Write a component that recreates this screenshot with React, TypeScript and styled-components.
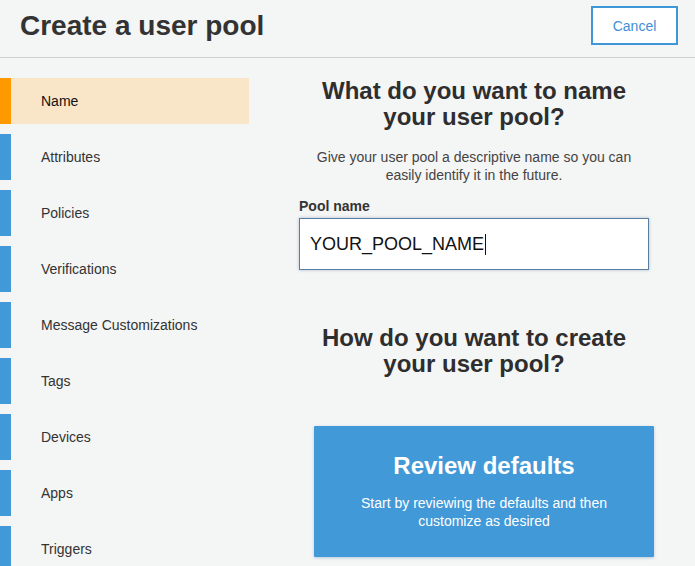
import React from 'react';
import styled, { createGlobalStyle } from 'styled-components';

const GlobalStyle = createGlobalStyle`
  html, body {
    margin: 0;
    padding: 0;
    background: #f4f5f5;
    font-family: "Liberation Sans", Arial, sans-serif;
    color: #333;
  }
  * {
    box-sizing: border-box;
  }
`;

const Page = styled.div`
  width: 695px;
  height: 566px;
  overflow: hidden;
  background: #f4f5f5;
`;

const Header = styled.header`
  height: 58px;
  display: flex;
  align-items: center;
  justify-content: space-between;
  padding: 0 17px 6px 20px;
  border-bottom: 1px solid #cfd1d1;
`;

const Title = styled.h1`
  margin: 0;
  font-size: 28px;
  font-weight: bold;
  color: #333;
`;

const CancelButton = styled.button`
  width: 87px;
  height: 39px;
  background: #fff;
  border: 2px solid #3f97d8;
  color: #3f8fd6;
  font-family: inherit;
  font-size: 14px;
  cursor: pointer;
`;

const Body = styled.div`
  display: grid;
  grid-template-columns: 249px minmax(0, 1fr);
  padding-top: 20px;
`;

const Nav = styled.nav`
  display: flex;
  flex-direction: column;
  gap: 10px;
`;

const NavItem = styled.div<{ $active?: boolean }>`
  height: 46px;
  display: flex;
  align-items: center;
  padding-left: 30px;
  border-left: 11px solid ${(p) => (p.$active ? '#ff9900' : '#4299d7')};
  background: ${(p) => (p.$active ? '#f9e5c8' : 'transparent')};
  font-size: 14px;
  color: ${(p) => (p.$active ? '#111' : '#333')};
`;

const Main = styled.main`
  display: flex;
  flex-direction: column;
  padding: 0 46px 0 50px;
`;

const Question = styled.h2<{ $gap?: number }>`
  margin: ${(p) => p.$gap ?? 0}px 0 0;
  font-size: 24px;
  line-height: 26px;
  font-weight: bold;
  text-align: center;
  color: #2e2e2e;
`;

const Hint = styled.p`
  margin: 18px 0 0;
  font-size: 14px;
  line-height: 18px;
  text-align: center;
  color: #444;
`;

const Label = styled.label`
  margin-top: 13px;
  font-size: 14px;
  line-height: 18px;
  font-weight: bold;
  color: #333;
`;

const Field = styled.div`
  margin-top: 3px;
  height: 52px;
  display: flex;
  align-items: center;
  padding-left: 10px;
  background: #fff;
  border: 1px solid #5b7f9f;
  box-shadow: 0 0 3px rgba(91, 127, 159, 0.45);
  font-size: 18px;
  color: #111;
`;

const Caret = styled.span`
  display: inline-block;
  width: 1px;
  height: 21px;
  background: #111;
  margin-left: 1px;
`;

const Card = styled.div`
  align-self: flex-start;
  flex-shrink: 0;
  margin: 49px 0 0 15px;
  width: 340px;
  padding: 27px 20px 27px;
  background: #4299d7;
  box-shadow: 0 1px 3px rgba(66, 120, 180, 0.35);
  color: #fff;
  text-align: center;
  border-radius: 1px;
`;

const CardTitle = styled.div`
  font-size: 24px;
  line-height: 26px;
  font-weight: bold;
`;

const CardText = styled.div`
  margin-top: 15px;
  font-size: 14px;
  line-height: 18px;
  padding: 0 20px;
`;

const steps = [
  'Name',
  'Attributes',
  'Policies',
  'Verifications',
  'Message Customizations',
  'Tags',
  'Devices',
  'Apps',
  'Triggers',
];

export default function App() {
  return (
    <Page>
      <GlobalStyle />
      <Header>
        <Title>Create a user pool</Title>
        <CancelButton>Cancel</CancelButton>
      </Header>
      <Body>
        <Nav>
          {steps.map((s, i) => (
            <NavItem key={s} $active={i === 0}>
              {s}
            </NavItem>
          ))}
        </Nav>
        <Main>
          <Question>
            What do you want to name
            <br />
            your user pool?
          </Question>
          <Hint>
            Give your user pool a descriptive name so you can
            <br />
            easily identify it in the future.
          </Hint>
          <Label>Pool name</Label>
          <Field>
            YOUR_POOL_NAME
            <Caret />
          </Field>
          <Question $gap={55}>
            How do you want to create
            <br />
            your user pool?
          </Question>
          <Card>
            <CardTitle>Review defaults</CardTitle>
            <CardText>Start by reviewing the defaults and then customize as desired</CardText>
          </Card>
        </Main>
      </Body>
    </Page>
  );
}
